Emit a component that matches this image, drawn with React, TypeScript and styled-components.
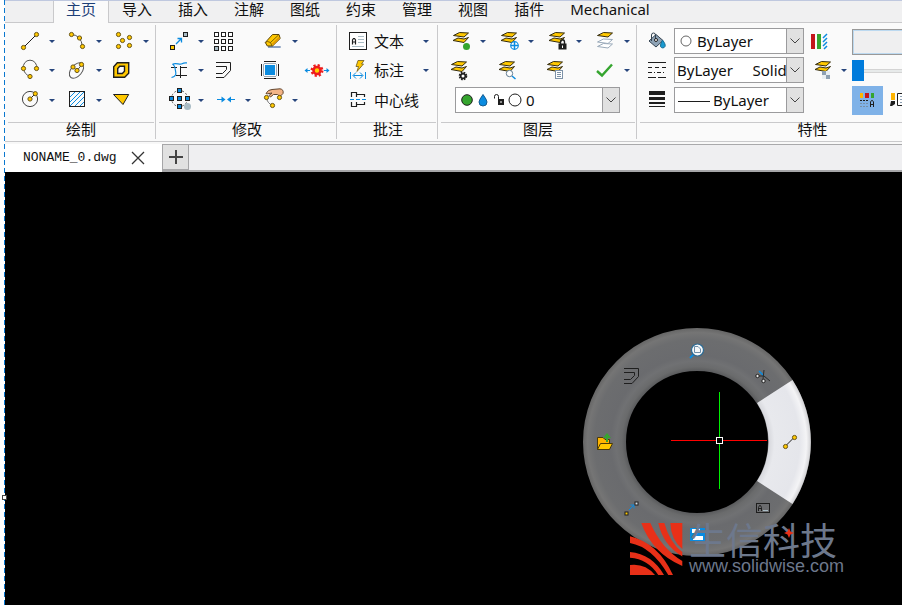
import React from "react";
import styled, { createGlobalStyle, css } from "styled-components";

const INK = "#1e1e1e";
const GOLD = "#ffc800";
const BLUE = "#0a8be0";
const GREEN = "#35a52f";
const LINE = "#c9c9cb";

const GlobalStyle = createGlobalStyle`
  * { box-sizing: border-box; }
  body {
    margin: 0;
    background: #fff;
    color: #101010;
    font: 15px/20px "Noto Sans", "Noto Sans CJK SC", sans-serif;
  }
  button, select, input { font: inherit; color: inherit; margin: 0; }
`;

/* ---------- layout ---------- */

const Window = styled.div`
  display: flex;
  min-height: 100vh;
  overflow: hidden;
`;

const Rail = styled.div`
  position: relative;
  flex: 0 0 5px;
  border-right: 1px solid transparent;
  background: repeating-linear-gradient(to bottom, #0a78d0 0 5px, #fff 5px 8px) right / 1px 100% no-repeat
    border-box;
`;

const RailHandle = styled.span`
  position: absolute;
  z-index: 1;
  left: 2px;
  top: 495px;
  width: 5px;
  height: 5px;
  border: 1px solid #444;
  background: #fff;
`;

const Main = styled.main`
  flex: 1;
  min-width: 0;
  display: flex;
  flex-direction: column;
`;

const TabBar = styled.nav`
  display: flex;
  height: 23px;
  padding-left: 48px;
  border-top: 1px solid #bfc8df;
  background: #f0f0f1;
  box-shadow: inset 0 -1px ${LINE};
`;

const RibbonTab = styled.button<{ $active?: boolean }>`
  height: 22px;
  padding: 0 13px 6px;
  border: 0;
  background: none;
  line-height: 16px;
  white-space: nowrap;
  ${(p) =>
    p.$active &&
    css`
      padding: 0 12px 6px;
      border: solid ${LINE};
      border-width: 0 1px;
      background: #fafafa;
      color: #1d3f78;
    `}
`;

const Ribbon = styled.div`
  display: flex;
  height: 118px;
  padding-top: 2px;
  overflow: hidden;
  background: #fafafa;
`;

const Panel = styled.section<{ $width: number }>`
  flex: 0 0 ${(p) => p.$width}px;
  min-width: 0;
  display: flex;
  flex-direction: column;
  height: 114px;
  border-right: 1px solid ${LINE};
`;

const PanelBody = styled.div<{ $left: number }>`
  display: grid;
  grid-template-rows: 29px 29px 30px;
  align-items: end;
  padding: 2px 0 0 ${(p) => p.$left}px;
  height: 97px;
`;

const PanelTitle = styled.h2`
  margin: 0 1px 0 3px;
  border-top: 1px solid ${LINE};
  font-size: 15px;
  font-weight: 400;
  line-height: 13px;
  text-align: center;
`;

const Row = styled.div<{ $pitch?: number }>`
  display: grid;
  grid-auto-flow: column;
  grid-auto-columns: ${(p) => p.$pitch ?? 47}px;
  height: 29px;
`;

const PropertyRow = styled.div`
  display: grid;
  grid-template-columns: 28px 130px 28px 11px 135px;
  column-gap: 3px;
  align-items: center;
  height: 29px;
`;

const Split = styled.div`
  display: flex;
`;

const IconButton = styled.button`
  flex: none;
  width: 28px;
  height: 29px;
  padding: 0;
  border: 0;
  background: none;
`;

const LabelButton = styled.button`
  display: flex;
  align-items: center;
  gap: 2px;
  width: 74px;
  height: 29px;
  padding: 0;
  border: 0;
  background: none;
  white-space: nowrap;
`;

const LabelText = styled.span`
  padding-bottom: 2px;
`;

const ArrowButton = styled.button`
  display: grid;
  place-items: center;
  width: 16px;
  max-width: 100%;
  height: 29px;
  padding: 0;
  border: 0;
  background: none;

  &::after {
    content: "";
    border: 3px solid transparent;
    border-top-color: #26457c;
    border-bottom: 0;
  }
`;

const Glyph = styled.svg`
  display: block;
  flex: none;
  overflow: visible;
`;

const Combo = styled.div<{ $width: number }>`
  display: grid;
  grid-template-columns: 1fr 17px;
  width: ${(p) => p.$width}px;
  height: 26px;
  margin-bottom: 1px;
  border: 1px solid #9b9b9d;
  background: #fff;
`;

const ComboSelect = styled.select<{ $indent: number }>`
  grid-area: 1 / 1 / 2 / 3;
  appearance: none;
  width: 100%;
  height: 24px;
  padding: 0 0 0 ${(p) => p.$indent}px;
  border: 0;
  border-radius: 0;
  background: none;
  white-space: pre;
`;

const ComboMark = styled.svg`
  grid-area: 1 / 1;
  pointer-events: none;
`;

const ComboChevron = styled.span`
  grid-area: 1 / 2;
  display: grid;
  place-items: center;
  z-index: 1;
  border-left: 1px solid #9b9b9d;
  background: #e1e1e1;
  pointer-events: none;
`;

const FieldBox = styled.input`
  width: 135px;
  height: 26px;
  border: 1px solid #999;
  box-shadow: inset 0 0 0 1px #bcd9f0;
  background: #efeff0;
`;

const Slider = styled.input`
  appearance: none;
  width: 135px;
  height: 21px;
  background: linear-gradient(#d4d4d4, #d4d4d4 1px, #e7eaea 1px, #e7eaea 3px, #d4d4d4 3px) center / 100% 4px no-repeat;

  &::-webkit-slider-thumb {
    appearance: none;
    width: 12px;
    height: 21px;
    background: #007bdb;
  }
`;

const Tiles = styled.div`
  display: flex;
  gap: 6px;
`;

const Tile = styled.button<{ $on?: boolean }>`
  width: 31px;
  height: 29px;
  padding: 0;
  border: 0;
  background: ${(p) => (p.$on ? "#7fb2e8" : "none")};
`;

const FileBar = styled.div`
  display: flex;
  height: 31px;
  padding-top: 2px;
  border-top: 1px solid ${LINE};
  border-bottom: 2px solid #a6a6a8;
  background: #efeff1;
  box-shadow: inset 0 2px #f8f8f8, inset 0 3px #a9a9ab;
`;

const FileTab = styled.div`
  display: flex;
  align-items: center;
  gap: 13px;
  width: 157px;
  height: 29px;
  padding: 0 0 2px 18px;
  background: #fff;
  font: 13px/20px "Liberation Mono", monospace;
`;

const CloseButton = styled.button`
  display: grid;
  place-items: center;
  width: 16px;
  height: 16px;
  padding: 0;
  border: 0;
  background: none;
`;

const AddButton = styled.button`
  display: grid;
  place-items: center;
  width: 27px;
  height: 26px;
  padding: 0;
  border: 1px solid #a6a6a8;
  background: #e1e1e1;
`;

const Canvas = styled.div`
  position: relative;
  flex: 1;
  min-height: 433px;
  background: #000;
`;

const Wheel = styled.svg`
  position: absolute;
  left: 578px;
  top: 156px;
`;

const Brand = styled.div`
  position: absolute;
  left: 625px;
  top: 350px;
  display: flex;
  gap: 6px;
  color: #6d788c;
`;

const BrandText = styled.div`
  white-space: nowrap;
`;

const BrandName = styled.div`
  font: 400 37px/34px "Noto Sans CJK SC", sans-serif;
`;

const BrandLink = styled.a`
  display: block;
  color: inherit;
  font: 18px/20px "Liberation Sans", sans-serif;
  text-decoration: none;
`;

const Spark = styled.svg`
  position: absolute;
  left: 154px;
  top: 6px;
`;

const PickerSlot = styled.div`
  display: flex;
  align-items: center;
  height: 29px;
  padding-left: 8px;
`;

/* ---------- drawing helpers ---------- */

type Pt = [number, number];

const Icon = ({ children }: { children: React.ReactNode }) => (
  <Glyph width="28" height="29" viewBox="0 0 28 29" fill="none" stroke={INK} aria-hidden="true">
    {children}
  </Glyph>
);

const Dots = ({ at }: { at: Pt[] }) => (
  <g fill={GOLD} stroke="#6a5616">
    {at.map(([x, y]) => (
      <circle key={`${x},${y}`} cx={x} cy={y} r="2.1" />
    ))}
  </g>
);

const Squares = ({ at, fill, size = 4 }: { at: Pt[]; fill: string; size?: number }) => (
  <g fill={fill}>
    {at.map(([x, y]) => (
      <rect key={`${x},${y}`} x={x - size / 2} y={y - size / 2} width={size} height={size} />
    ))}
  </g>
);

/* ---------- draw icons ---------- */

const LineIcon = () => (
  <Icon>
    <path d="M7.5 20.5L20.5 7.5" />
    <Dots at={[[7.5, 20.5], [20.5, 7.5]]} />
  </Icon>
);
const ArcIcon = () => (
  <Icon>
    <path d="M8.5 7.5Q18 8 19.5 19.5" stroke="#555" />
    <Dots at={[[8.5, 7.5], [16.5, 11], [19.5, 19.5]]} />
  </Icon>
);
const PointsIcon = () => (
  <Icon>
    <Dots at={[[8.5, 7.5], [19.5, 10.5], [12.5, 13.5], [8.5, 19.5], [19.5, 18.5]]} />
  </Icon>
);
const PolylineIcon = () => (
  <Icon>
    <path d="M7.5 12.5A6.7 6.7 0 1 1 20.5 12.5M7.5 12.5Q8 18 14 20.5" stroke="#555" />
    <Dots at={[[7.5, 12.5], [20.5, 12.5], [14, 20.5]]} />
  </Icon>
);
const EllipseIcon = () => (
  <Icon>
    <ellipse cx="13.5" cy="14.5" rx="9" ry="5.5" transform="rotate(-50 13.5 14.5)" stroke="#555" />
    <path d="M10 11L14 14.5L19 8.5" stroke="#555" />
    <Dots at={[[10, 11], [18.5, 8.5], [14, 14.5]]} />
  </Icon>
);
const RegionIcon = () => (
  <Icon>
    <path
      fillRule="evenodd"
      fill={GOLD}
      strokeWidth="1.4"
      d="M3.7 21.3V10.7L7.3 6.7H18.7V17.3L14.7 21.3ZM7.7 17.5V12.5L9.7 10.3H14.5V15.3L12.3 17.5Z"
    />
  </Icon>
);
const CircleIcon = () => (
  <Icon>
    <circle cx="14" cy="13" r="7.6" stroke="#444" />
    <path d="M14 13L19.3 7.7" />
    <Dots at={[[14, 13], [19.3, 7.7]]} />
  </Icon>
);
const HatchIcon = () => (
  <Icon>
    <path d="M7 11L12 6M7 16L17 6M7 20L21 6M12 20L21 11M17 20L21 16" stroke={BLUE} />
    <rect x="6.5" y="5.5" width="15" height="15" />
  </Icon>
);
const WedgeIcon = () => (
  <Icon>
    <path d="M3.5 8.5H18.7L13 18.5Z" fill={GOLD} />
  </Icon>
);

/* ---------- modify icons ---------- */

const MoveIcon = () => (
  <Icon>
    <path d="M11 17L16 12M12.5 11.5H16.5V15.5" stroke={BLUE} strokeWidth="1.3" />
    <Squares at={[[7.5, 20.5]]} fill={GOLD} />
    <Squares at={[[20.5, 7.5]]} fill="#a9bcc5" />
  </Icon>
);
const ArrayIcon = () => (
  <Icon>
    <Squares
      at={[[4.5, 7.5], [11.5, 7.5], [18.5, 7.5], [4.5, 14.5], [11.5, 14.5], [18.5, 14.5], [11.5, 21.5], [18.5, 21.5]]}
      fill="#fff"
    />
    <Squares at={[[4.5, 21.5]]} fill="#a9bcc5" />
  </Icon>
);
const EraserIcon = () => (
  <Icon>
    <path d="M9 20H21.7" stroke="#8a9fc0" strokeWidth="2" />
    <path d="M6.3 15.5L13.5 7.5H20L21.2 11.5L13.5 19H8.3Z" fill={GOLD} stroke="#5b4508" />
    <path d="M13.5 17.5L20.5 10.5" stroke="#e19a00" strokeWidth="2" />
    <path d="M6.5 15.5L8.5 14.500L11.500 15.500L13 19M11.500 15.500L19.500 8" stroke="#5b4508" strokeWidth=".8" />
  </Icon>
);
const TrimIcon = () => (
  <Icon>
    <path d="M6 11.5H12M15 11.5H22M11 19.5H22M15.5 10V22" />
    <path d="M6.5 21.5C13 20 10.5 16 10 12S6 8.5 9 7.8S15 9 17 7.8S20 7 22 6.8" stroke={BLUE} strokeWidth="1.2" />
  </Icon>
);
const OFFSET_PATH = "M4 6.5H18.5V14.5L12 21.5H4M4 10.5H14.5V13.5L10.5 17.5H4";
const OffsetIcon = () => (
  <Icon>
    <path d={OFFSET_PATH} />
  </Icon>
);
const StretchIcon = () => (
  <Icon>
    <rect x="6" y="9" width="10" height="10" fill={BLUE} stroke="none" />
    <path d="M5 5.5H17M5 22.5H17M2.5 8V20M19.5 8V20" />
    <path d="M5 7.5H17M5 20.5H17M4.5 8V20M17.5 8V20" stroke="#9cabb8" />
  </Icon>
);
const ExplodeIcon = () => (
  <Icon>
    <path d="M-1 14.5H4M18 14.5H23" stroke={BLUE} />
    <path d="M-1.5 14.5L1.5 12V17ZM23.5 14.5L20.5 12V17Z" fill={BLUE} stroke="none" />
    <circle cx="11" cy="14.5" r="5.3" stroke="#ee1c1c" strokeWidth="2.4" strokeDasharray="2.16 2" />
    <circle cx="11" cy="14.5" r="3.5" fill="#ffd200" stroke="#ee1c1c" strokeWidth="2.6" />
  </Icon>
);
const RotateIcon = () => (
  <Icon>
    <circle cx="14.5" cy="12.5" r="8" stroke="#555" strokeDasharray="2 2" />
    <circle cx="22.5" cy="20.5" r="3.5" fill="#a9bcc5" stroke="none" />
    <Squares at={[[14.5, 4.5], [6.5, 12.5], [14.5, 12.5], [22.5, 12.5], [14.5, 20.5]]} fill={BLUE} />
  </Icon>
);
const JoinIcon = () => (
  <Icon>
    <path d="M5 13.5H12M16 13.5H23" stroke={BLUE} />
    <path d="M13.5 13.5L9.5 10.5V16.5ZM15 13.5L19 10.5V16.5Z" fill={BLUE} stroke="none" />
  </Icon>
);
const HandIcon = () => (
  <Icon>
    <path
      d="M7 7.5Q9 3.5 13 3.5L21 2.8Q25 3.5 24 7.5L21 10.5L18.5 8.5L14.5 8.5L11.5 11L10 9.5L13 7L8.5 7.8Z"
      fill="#f3b487"
      stroke="#61452e"
    />
    <path d="M7.5 11.5Q8 17 13.5 19.5" stroke="#777" />
    <Dots at={[[7.5, 11.5], [20.5, 11.5], [13.5, 19.5]]} />
  </Icon>
);

/* ---------- annotation icons ---------- */

const TextIcon = () => (
  <Icon>
    <rect x="5.5" y="5.5" width="17" height="17" fill="#fff" />
    <path d="M8.5 17.5V13L9.5 11.5H10.5L11.5 13V17.5M8.5 15H11.5" strokeWidth="1.2" />
    <path d="M14 9.5H20M14 12.5H20M14 15.5H20M8 19.5H20" stroke="#a9bcc5" />
  </Icon>
);
const DimensionIcon = () => (
  <Icon>
    <path d="M14 4.5H20L17.5 8H19.5L13 15.5L14.5 10.5H12Z" fill={GOLD} stroke="#69591c" strokeWidth=".8" />
    <path
      d="M6.5 16V23M21.5 16V23M9.5 19.5H18.5M12 16.5L9 19.5L12 22.5M16 16.5L19 19.5L16 22.5"
      stroke={BLUE}
    />
  </Icon>
);
const CenterlineIcon = () => (
  <Icon>
    <path d="M7.5 11V6.5H12.5V8.5H20.5V11M7.5 16V20.5H12.5V18.5H20.5V16M12.5 8.5V11M12.5 18.5V16" strokeWidth="1.2" />
    <path d="M6 13.5H22" stroke={BLUE} strokeDasharray="4 2" />
  </Icon>
);

/* ---------- layer icons ---------- */

const Sheet = ({ y, fill = GOLD, ink = "#332b10" }: { y: number; fill?: string; ink?: string }) => (
  <path d={`M6.5 ${y + 3}L12.5 ${y}L21.5 ${y + 0.5}L17 ${y + 4.5}Z`} fill={fill} stroke={ink} />
);
const Layers = ({ children, shift = 0 }: { children?: React.ReactNode; shift?: number }) => (
  <Icon>
    <g transform={`translate(${shift} 0)`}>
      <path d="M6 13.5L11 11L17 12L21.5 10.5L17 15.5Z" fill={GOLD} stroke="#332b10" />
      <Sheet y={5.5} />
      {children}
    </g>
  </Icon>
);
const LayerOnIcon = () => (
  <Layers>
    <circle cx="19.5" cy="19.5" r="3.5" fill={GREEN} stroke="none" />
  </Layers>
);
const LayerNewIcon = () => (
  <Layers>
    <circle cx="19.5" cy="18.5" r="3.8" fill="#fff" stroke={BLUE} strokeWidth="1.2" />
    <path d="M19.5 15V22M16 18.5H23" stroke={BLUE} strokeWidth="1.5" />
  </Layers>
);
const LayerLockIcon = () => (
  <Layers>
    <path d="M15 16H24V23H15Z" fill="#fafafa" stroke="none" />
    <rect x="16" y="17" width="7" height="5" fill={INK} />
    <path d="M17.5 17V15A2 2.2 0 0 1 21.5 15V17" strokeWidth="1.4" />
    <path d="M19.5 18.5V21" stroke="#fff" />
  </Layers>
);
const LayerMatchIcon = () => (
  <Icon>
    <Sheet y={16.5} fill="#fff" ink="#9aaaba" />
    <Sheet y={12} fill="#fff" ink="#9aaaba" />
    <Sheet y={5.5} />
  </Icon>
);
const LayerSettingsIcon = () => (
  <Layers shift={-2}>
    <circle cx="18" cy="20" r="3.3" stroke="#222" strokeWidth="2" strokeDasharray="1.7 .9" />
    <circle cx="18" cy="20" r="2.3" fill="#fff" strokeWidth="1.6" />
  </Layers>
);
const LayerFindIcon = () => (
  <Layers shift={-2}>
    <path d="M19 20L22.5 23" stroke={BLUE} strokeWidth="1.5" />
    <circle cx="16.5" cy="17.5" r="3.2" fill="#fff" stroke="#607b92" />
  </Layers>
);
const LayerListIcon = () => (
  <Layers shift={-2}>
    <rect x="14.5" y="14.5" width="7" height="8" fill="#fff" stroke="#7d92a8" />
    <path d="M16 16.5H20M16 18.5H20M16 20.5H20" stroke="#7d92a8" />
  </Layers>
);
const CheckIcon = () => (
  <Icon>
    <path d="M6 15L11 19.5L21 8.5" stroke={GREEN} strokeWidth="2.4" />
  </Icon>
);

/* ---------- property icons ---------- */

const BucketIcon = () => (
  <Icon>
    <path d="M6 14L13 7.5L20 13.5L13 20Z" fill="#8da2b5" stroke="#344452" />
    <path d="M8.5 14V8A2 2 0 0 1 12.5 8V12.5" stroke="#344452" />
    <circle cx="13" cy="13" r="1.5" fill="#fff" />
    <path
      d="M19.5 13Q23 17.5 22 19.5A2.5 2.5 0 0 1 17.5 19.5Q17 17.5 19.5 13Z"
      fill="#1a9ad0"
      stroke="#176c93"
    />
  </Icon>
);
const LinetypeIcon = () => (
  <Icon>
    <path d="M5 6.5H23" />
    <path d="M5 11.5H23" strokeDasharray="4 3" />
    <path d="M5 16.5H23" strokeDasharray="4 2 1 2" />
    <path d="M5 21.5H23" strokeDasharray="8 2" />
  </Icon>
);
const LineweightIcon = () => (
  <Icon>
    <path d="M6 7H22" strokeWidth="4" />
    <path d="M6 12.5H22" strokeWidth="3" />
    <path d="M6 17H22" strokeWidth="2" />
    <path d="M6 20.5H22" />
  </Icon>
);
const ColorsIcon = () => (
  <Icon>
    <path d="M6 7V22" stroke="#c4161c" strokeWidth="4" />
    <path d="M12 7V22" stroke={GREEN} strokeWidth="4" />
    <path d="M16 11L20 7M16 15L20 11M16 19L20 15M17 22L20 19" stroke={BLUE} strokeWidth="1.5" />
  </Icon>
);
const TransparencyIcon = () => (
  <Layers shift={2}>
    <path d="M13 15H21V23H13Z" fill="#e8eef3" stroke="none" />
    <path d="M13 15H17V19H13ZM17 19H21V23H17Z" fill="#8da0b3" stroke="none" />
  </Layers>
);
const StyleIcon = () => (
  <Glyph width="31" height="29" fill="none" stroke={INK} aria-hidden="true">
    <path d="M8 7H11V12H8Z" fill="#ffb400" stroke="none" />
    <path d="M13 7H17V12H13Z" fill="#c4161c" stroke="none" />
    <path d="M19 7H22V12H19Z" fill={GREEN} stroke="none" />
    <path d="M8 14.5H16" strokeDasharray="2 1" />
    <path d="M8 17.5H16M8 20.5H16" stroke="#7890a6" strokeDasharray="2 1" />
    <path d="M18.5 21V16L19.5 14.5H20.5L21.5 16V21M18.5 18.5H21.5" />
  </Glyph>
);
const MatchIcon = () => (
  <Glyph width="31" height="29" fill="none" stroke={INK} aria-hidden="true">
    <path d="M2 7H6V14H2Z" fill="#ffb400" stroke="none" />
    <path d="M2 15H6V18L3 20H1Z" fill={INK} stroke="none" />
    <path d="M8.5 7.5H20.5V19.5H8.5Z" fill="#fff" />
    <path d="M11 10.5H18M11 13.5H18M11 16.5H18" stroke="#8da0b3" />
  </Glyph>
);

/* ---------- composite controls ---------- */

type ToolDef = { name: string; icon: React.ReactNode; menu?: boolean };

const Tool = ({ name, icon, menu }: ToolDef) => (
  <Split>
    <IconButton aria-label={name}>{icon}</IconButton>
    {menu && <ArrowButton aria-label={`${name} 选项`} />}
  </Split>
);

const ToolRow = ({ tools, pitch }: { tools: ToolDef[]; pitch?: number }) => (
  <Row $pitch={pitch}>
    {tools.map((t) => (
      <Tool key={t.name} {...t} />
    ))}
  </Row>
);

const Select = ({
  label,
  value,
  indent,
  width,
  children,
}: {
  label: string;
  value: string;
  indent: number;
  width: number;
  children?: React.ReactNode;
}) => (
  <Combo $width={width}>
    <ComboSelect aria-label={label} $indent={indent}>
      <option>{value}</option>
    </ComboSelect>
    {children && (
      <ComboMark width="70" height="24" fill="none" stroke={INK} aria-hidden="true">
        {children}
      </ComboMark>
    )}
    <ComboChevron>
      <svg width="10" height="6" fill="none" stroke="#444" aria-hidden="true">
        <path d="M.5 .5L5 5L9.5 .5" />
      </svg>
    </ComboChevron>
  </Combo>
);

const LayerPicker = () => (
  <PickerSlot>
    <Select label="当前图层" value="0" indent={70} width={165}>
      <circle cx="11" cy="12" r="5.3" fill={GREEN} />
      <path d="M27 6.5Q31 12 31 14A4 4 0 0 1 23 14Q23 12 27 6.5Z" fill={BLUE} stroke="#165d91" />
      <rect x="42.5" y="11.5" width="5" height="5" fill={INK} />
      <path d="M38.5 10.5V8.5A2 2 0 0 1 42.5 8.5V11.5" />
      <path d="M45 13V15" stroke="#fff" />
      <circle cx="59" cy="12" r="6" fill="#fff" />
    </Select>
  </PickerSlot>
);

const drawRows: ToolDef[][] = [
  [
    { name: "直线", icon: <LineIcon />, menu: true },
    { name: "圆弧", icon: <ArcIcon />, menu: true },
    { name: "点", icon: <PointsIcon />, menu: true },
  ],
  [
    { name: "多段线", icon: <PolylineIcon />, menu: true },
    { name: "椭圆", icon: <EllipseIcon />, menu: true },
    { name: "面域", icon: <RegionIcon /> },
  ],
  [
    { name: "圆", icon: <CircleIcon />, menu: true },
    { name: "填充", icon: <HatchIcon />, menu: true },
    { name: "实体", icon: <WedgeIcon /> },
  ],
];

const modifyRows: ToolDef[][] = [
  [
    { name: "移动", icon: <MoveIcon />, menu: true },
    { name: "阵列", icon: <ArrayIcon /> },
    { name: "删除", icon: <EraserIcon />, menu: true },
  ],
  [
    { name: "修剪", icon: <TrimIcon />, menu: true },
    { name: "偏移", icon: <OffsetIcon /> },
    { name: "拉伸", icon: <StretchIcon /> },
    { name: "分解", icon: <ExplodeIcon /> },
  ],
  [
    { name: "旋转", icon: <RotateIcon />, menu: true },
    { name: "合并", icon: <JoinIcon />, menu: true },
    { name: "编辑", icon: <HandIcon />, menu: true },
  ],
];

const layerRows: ToolDef[][] = [
  [
    { name: "打开图层", icon: <LayerOnIcon />, menu: true },
    { name: "新建图层", icon: <LayerNewIcon />, menu: true },
    { name: "锁定图层", icon: <LayerLockIcon />, menu: true },
    { name: "匹配图层", icon: <LayerMatchIcon />, menu: true },
  ],
  [
    { name: "图层设置", icon: <LayerSettingsIcon /> },
    { name: "查找图层", icon: <LayerFindIcon /> },
    { name: "图层列表", icon: <LayerListIcon /> },
    { name: "应用图层", icon: <CheckIcon />, menu: true },
  ],
];

const tabs = ["主页", "导入", "插入", "注解", "图纸", "约束", "管理", "视图", "插件", "Mechanical"];

const annotations = [
  { name: "文本", icon: <TextIcon />, menu: true },
  { name: "标注", icon: <DimensionIcon />, menu: true },
  { name: "中心线", icon: <CenterlineIcon />, menu: false },
];

/* ---------- radial menu ---------- */

const RadialMenu = () => (
  <Wheel width="228" height="230" viewBox="-114 -114 228 230" fill="none" role="img" aria-label="径向菜单">
    <defs>
      <radialGradient id="ring" gradientUnits="userSpaceOnUse" cx="0" cy="0" r="114">
        <stop offset=".62" stopColor="#58595b" />
        <stop offset=".66" stopColor="#6a6b6c" />
        <stop offset=".71" stopColor="#707173" />
        <stop offset=".76" stopColor="#6a6b6e" />
        <stop offset=".9" stopColor="#6c6d6f" />
        <stop offset=".96" stopColor="#757575" />
        <stop offset="1" stopColor="#666" />
      </radialGradient>
      <radialGradient id="slice" gradientUnits="userSpaceOnUse" cx="0" cy="0" r="114">
        <stop offset=".62" stopColor="#d4d5da" />
        <stop offset=".68" stopColor="#e8e9ed" />
        <stop offset=".9" stopColor="#e5e6eb" />
        <stop offset=".96" stopColor="#f4f4f6" />
        <stop offset="1" stopColor="#d0d0d3" />
      </radialGradient>
    </defs>
    <circle r="92.5" stroke="url(#ring)" strokeWidth="43" />
    <path d="M95.5 -62A114 114 0 0 1 95.5 62L60 39A71.5 71.5 0 0 0 60 -39Z" fill="url(#slice)" />

    <g stroke={INK}>
      <path transform="translate(-77 -80)" d={OFFSET_PATH} />
      <g transform="translate(79 -14)">
        <path d="M9 18.5L18 9.5" />
        <Dots at={[[9.5, 18.5], [18.5, 9.5]]} />
      </g>
      <g transform="translate(-80 51)">
        <path d="M12 17L17 12M13.5 12H17V15.5" stroke={BLUE} />
        <Squares at={[[9.5, 20.5]]} fill={GOLD} size={3} />
        <Squares at={[[19.5, 10.5]]} fill="#d5dde2" size={3} />
      </g>
    </g>

    <path d="M-3 -88L-7 -84" stroke={BLUE} strokeWidth="2" />
    <circle cx="0.5" cy="-92" r="6" fill="#f5f7f9" stroke="#2b6a94" strokeWidth="1.2" />
    <path d="M-2.5 -95.5H1L3.5 -93V-89.5H-2.5Z" stroke="#6f8ea8" />

    <path d="M62 -71L67 -66" stroke={BLUE} strokeWidth="1.5" />
    <path d="M67 -72L66 -63M62 -66L67 -66L73 -61" stroke="#2c2c2c" />
    <circle cx="60.5" cy="-66" r="1.7" fill="#e8e8e8" stroke={INK} />
    <circle cx="66.5" cy="-61" r="1.7" fill="#e8e8e8" stroke={INK} />

    <path d="M-99.5 7.5V-4.5H-94L-92 -2.5H-87.5V7.5Z" fill="#ffb400" stroke="#4a3a0a" />
    <path d="M-99.5 7.5L-96.5 1.5H-84.5L-87.5 7.5Z" fill={GOLD} stroke="#4a3a0a" />
    <path d="M-90 0V-4" stroke={GREEN} strokeWidth="2" />
    <path d="M-94 -4L-90 -9L-86 -4Z" fill={GREEN} />

    <rect x="59.5" y="61.5" width="13" height="9" stroke={INK} />
    <path d="M61.5 69V65.5L62.5 63.5H63.5L64.5 65.5V69M61.5 66.5H64.5" stroke={INK} />
    <path d="M66 68.5H71" stroke="#a9bcc5" />

    <rect x="-7" y="86" width="15" height="13" fill={BLUE} />
    <path d="M-5 87H3V91H-5ZM-4 94H6V98H-4Z" fill="#fff" />

    <path d="M-26 -1.5H70" stroke="#f00" />
    <path d="M22.5 -50V47" stroke="#00f000" />
    <rect x="19.5" y="-4.5" width="6" height="6" fill="#000" stroke="#fff" />
  </Wheel>
);

const BrandMark = () => (
  <Glyph width="53" height="54" viewBox="0 0 53 54" fill="#e83018" aria-hidden="true">
    <path d="M11.3 1H20.3Q32 27 52.3 39V44Q22 31 11.3 1Z" />
    <path d="M28.3 1H34.3Q40 21 52.3 30V34.5Q33 23 28.3 1Z" />
    <path d="M40.3 1H52.3V27Q41 18 40.3 1Z" />
    <path d="M0 14.3Q28 21 43 53H38.3Q22 25 0 21Z" />
    <path d="M0 30Q22 32 34 53H28.3Q18 37 0 35.7Z" />
    <path d="M0 43Q15 41 25 53H0Z" />
  </Glyph>
);

export default function App() {
  return (
    <Window>
      <GlobalStyle />
      <Rail>
        <RailHandle />
      </Rail>
      <Main>
        <TabBar>
          {tabs.map((t, i) => (
            <RibbonTab key={t} $active={i === 0}>
              {t}
            </RibbonTab>
          ))}
        </TabBar>

        <Ribbon>
          <Panel $width={151}>
            <PanelBody $left={11}>
              {drawRows.map((r, i) => (
                <ToolRow key={i} tools={r} />
              ))}
            </PanelBody>
            <PanelTitle>绘制</PanelTitle>
          </Panel>

          <Panel $width={181}>
            <PanelBody $left={9}>
              {modifyRows.map((r, i) => (
                <ToolRow key={i} tools={r} />
              ))}
            </PanelBody>
            <PanelTitle>修改</PanelTitle>
          </Panel>

          <Panel $width={101}>
            <PanelBody $left={7}>
              {annotations.map((a) => (
                <Split key={a.name}>
                  <LabelButton>
                    {a.icon}
                    <LabelText>{a.name}</LabelText>
                  </LabelButton>
                  {a.menu && <ArrowButton aria-label={`${a.name} 选项`} />}
                </Split>
              ))}
            </PanelBody>
            <PanelTitle>批注</PanelTitle>
          </Panel>

          <Panel $width={199}>
            <PanelBody $left={9}>
              {layerRows.map((r, i) => (
                <ToolRow key={i} tools={r} pitch={48} />
              ))}
              <LayerPicker />
            </PanelBody>
            <PanelTitle>图层</PanelTitle>
          </Panel>

          <Panel $width={350}>
            <PanelBody $left={6}>
              <PropertyRow>
                <IconButton aria-label="颜色">
                  <BucketIcon />
                </IconButton>
                <Select label="颜色" value="ByLayer" indent={22} width={130}>
                  <circle cx="11" cy="12" r="5" stroke="#666" />
                </Select>
                <IconButton aria-label="颜色库">
                  <ColorsIcon />
                </IconButton>
                <span />
                <FieldBox aria-label="透明度值" />
              </PropertyRow>
              <PropertyRow>
                <IconButton aria-label="线型">
                  <LinetypeIcon />
                </IconButton>
                <Select
                  label="线型"
                  value={"ByLayer\u00a0\u00a0\u00a0\u00a0\u00a0Solid line"}
                  indent={2}
                  width={130}
                />
                <IconButton aria-label="透明度">
                  <TransparencyIcon />
                </IconButton>
                <ArrowButton aria-label="透明度选项" />
                <Slider type="range" defaultValue={0} aria-label="透明度" />
              </PropertyRow>
              <PropertyRow>
                <IconButton aria-label="线宽">
                  <LineweightIcon />
                </IconButton>
                <Select label="线宽" value="ByLayer" indent={38} width={130}>
                  <path d="M3 13.5H35" />
                </Select>
                <span />
                <span />
                <Tiles>
                  <Tile $on aria-label="特性面板">
                    <StyleIcon />
                  </Tile>
                  <Tile aria-label="特性匹配">
                    <MatchIcon />
                  </Tile>
                </Tiles>
              </PropertyRow>
            </PanelBody>
            <PanelTitle>特性</PanelTitle>
          </Panel>
        </Ribbon>

        <FileBar>
          <FileTab>
            NONAME_0.dwg
            <CloseButton aria-label="关闭">
              <svg width="14" height="14" stroke="#333" strokeWidth="1.3" aria-hidden="true">
                <path d="M1 1L13 13M13 1L1 13" />
              </svg>
            </CloseButton>
          </FileTab>
          <AddButton aria-label="新建">
            <svg width="14" height="14" stroke="#444" strokeWidth="2" aria-hidden="true">
              <path d="M7 0V14M0 7H14" />
            </svg>
          </AddButton>
        </FileBar>

        <Canvas>
          <RadialMenu />
          <Brand>
            <BrandMark />
            <BrandText>
              <BrandName>生信科技</BrandName>
              <BrandLink href="#solidwise">www.solidwise.com</BrandLink>
            </BrandText>
            <Spark width="10" height="10" aria-hidden="true">
              <path d="M5 0L6.5 3.5L10 5L6.5 6.5L5 10L3.5 6.5L0 5L3.5 3.5Z" fill="#e83018" />
            </Spark>
          </Brand>
        </Canvas>
      </Main>
    </Window>
  );
}
